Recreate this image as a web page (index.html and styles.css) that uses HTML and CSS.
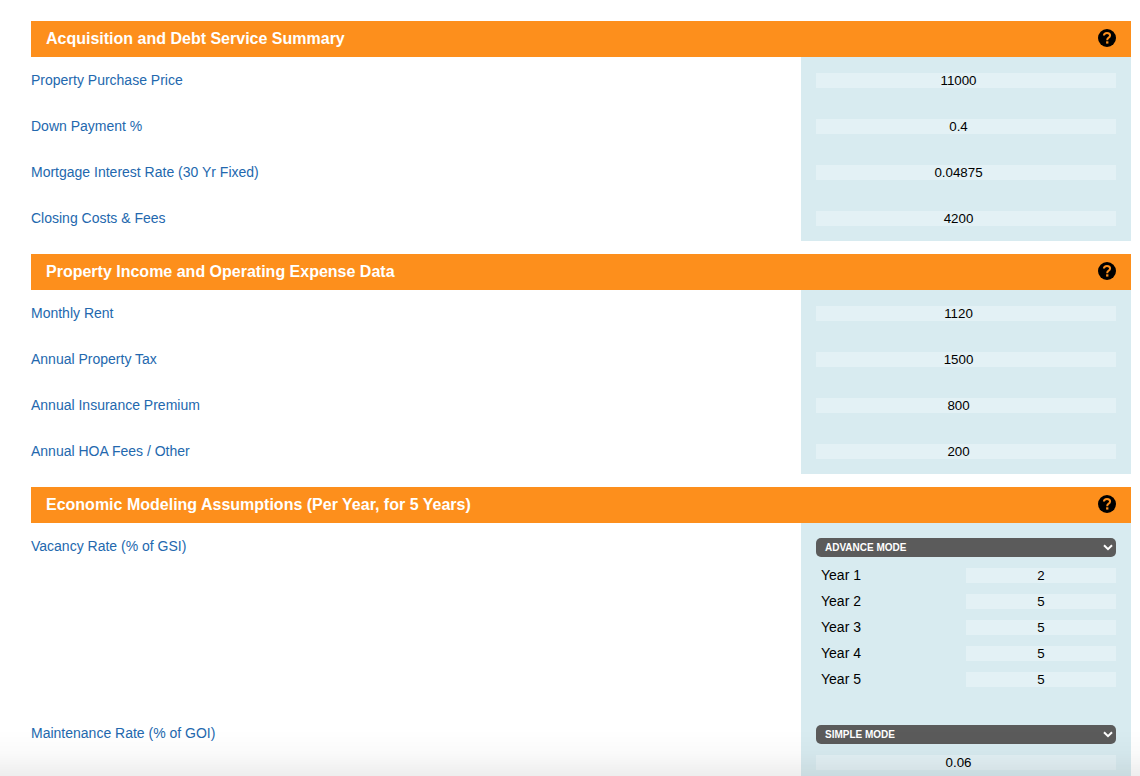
FILE: index.html
```html
<!DOCTYPE html>
<html lang="en">
<head>
<meta charset="utf-8">
<title>Property Analysis</title>
<link rel="stylesheet" href="styles.css">
</head>
<body>
<svg class="sprite" width="0" height="0">
  <symbol id="help" viewBox="0 0 18 18">
    <circle cx="9" cy="9" r="9" fill="#000"/>
    <path d="M5.900 6.500C6 4.800 7.200 3.900 9 3.900c1.900 0 3.100 1 3.100 2.500 0 1.300-.8 1.900-1.700 2.500-.9.600-1.200 1-1.200 2.300" fill="none" stroke="#fd8f1c" stroke-width="2"/>
    <rect x="8.100" y="12.300" width="2.300" height="2.300" fill="#fd8f1c"/>
  </symbol>
  <symbol id="chevron" viewBox="0 0 10 7">
    <path d="M1 1.200L5 5.200L9 1.200" fill="none" stroke="#fff" stroke-width="2"/>
  </symbol>
</svg>
<main class="sheet">
  <section class="group">
    <header class="bar"><h2 class="title">Acquisition and Debt Service Summary</h2><svg class="help"><use href="#help"/></svg></header>
    <div class="row"><div class="label">Property Purchase Price</div><div class="cell"><div class="field">11000</div></div></div>
    <div class="row"><div class="label">Down Payment %</div><div class="cell"><div class="field">0.4</div></div></div>
    <div class="row"><div class="label">Mortgage Interest Rate (30 Yr Fixed)</div><div class="cell"><div class="field">0.04875</div></div></div>
    <div class="row"><div class="label">Closing Costs &amp; Fees</div><div class="cell"><div class="field">4200</div></div></div>
  </section>
  <section class="group">
    <header class="bar"><h2 class="title">Property Income and Operating Expense Data</h2><svg class="help"><use href="#help"/></svg></header>
    <div class="row"><div class="label">Monthly Rent</div><div class="cell"><div class="field">1120</div></div></div>
    <div class="row"><div class="label">Annual Property Tax</div><div class="cell"><div class="field">1500</div></div></div>
    <div class="row"><div class="label">Annual Insurance Premium</div><div class="cell"><div class="field">800</div></div></div>
    <div class="row"><div class="label">Annual HOA Fees / Other</div><div class="cell"><div class="field">200</div></div></div>
  </section>
  <section class="group">
    <header class="bar"><h2 class="title">Economic Modeling Assumptions (Per Year, for 5 Years)</h2><svg class="help"><use href="#help"/></svg></header>
    <div class="row tall">
      <div class="label">Vacancy Rate (% of GSI)</div>
      <div class="cell modal">
        <div class="select"><span>ADVANCE MODE</span><svg class="chevron"><use href="#chevron"/></svg></div>
        <div class="years">
          <div class="year"><span class="name">Year 1</span><div class="field half">2</div></div>
          <div class="year"><span class="name">Year 2</span><div class="field half">5</div></div>
          <div class="year"><span class="name">Year 3</span><div class="field half">5</div></div>
          <div class="year"><span class="name">Year 4</span><div class="field half">5</div></div>
          <div class="year"><span class="name">Year 5</span><div class="field half">5</div></div>
        </div>
      </div>
    </div>
    <div class="row">
      <div class="label">Maintenance Rate (% of GOI)</div>
      <div class="cell modal">
        <div class="select"><span>SIMPLE MODE</span><svg class="chevron"><use href="#chevron"/></svg></div>
        <div class="field single">0.06</div>
      </div>
    </div>
  </section>
</main>
<div class="fade"></div>
</body>
</html>
```
FILE: styles.css
```css
* { box-sizing: border-box; }
html, body { height: 100%; }
body {
  margin: 0;
  overflow: hidden;
  background: #fff;
  color: #000;
  font-family: "Liberation Sans", Arial, sans-serif;
  font-size: 14px;
}
.sprite { position: absolute; }
.sheet {
  display: flex;
  flex-direction: column;
  gap: 13px;
  width: 1131px;
  padding: 21px 0 0 31px;
}
.bar {
  display: flex;
  align-items: center;
  justify-content: space-between;
  height: 36px;
  padding: 0 15px;
  background: #fd8f1c;
}
.title {
  margin: 0;
  color: #fff;
  font-size: 16px;
  line-height: 18px;
}
.help { width: 18px; height: 18px; margin-top: -2px; }
.row {
  display: grid;
  grid-template-columns: 1fr 330px;
  min-height: 46px;
}
.tall { min-height: 187px; }
.label {
  padding-top: 15px;
  color: #2368ae;
  line-height: 16px;
}
.cell {
  padding: 16px 15px 0;
  background: #d8ebf0;
}
.modal { padding: 15px 15px 23px; }
.field {
  height: 15px;
  padding-right: 15px;
  background: #e3f1f5;
  font-size: 13.333px;
  line-height: 15px;
  text-align: center;
}
.select {
  display: flex;
  align-items: center;
  justify-content: space-between;
  height: 19px;
  padding: 0 3px 0 9px;
  border-radius: 5px;
  background: #5b5b5b;
  color: #fff;
  font-size: 10px;
  font-weight: bold;
}
.chevron { width: 10px; height: 7px; }
.years {
  display: grid;
  gap: 11px;
  padding-top: 11px;
}
.year {
  display: flex;
  justify-content: space-between;
  height: 15px;
}
.name { padding-left: 5px; line-height: 15px; }
.half { width: 150px; padding-right: 0; }
.single { margin-top: 11px; }
.fade {
  position: fixed;
  right: 0;
  bottom: 0;
  left: 0;
  height: 46px;
  background: linear-gradient(rgba(0, 0, 0, 0), rgba(0, 0, 0, .02) 50%, rgba(0, 0, 0, .065));
}
```
